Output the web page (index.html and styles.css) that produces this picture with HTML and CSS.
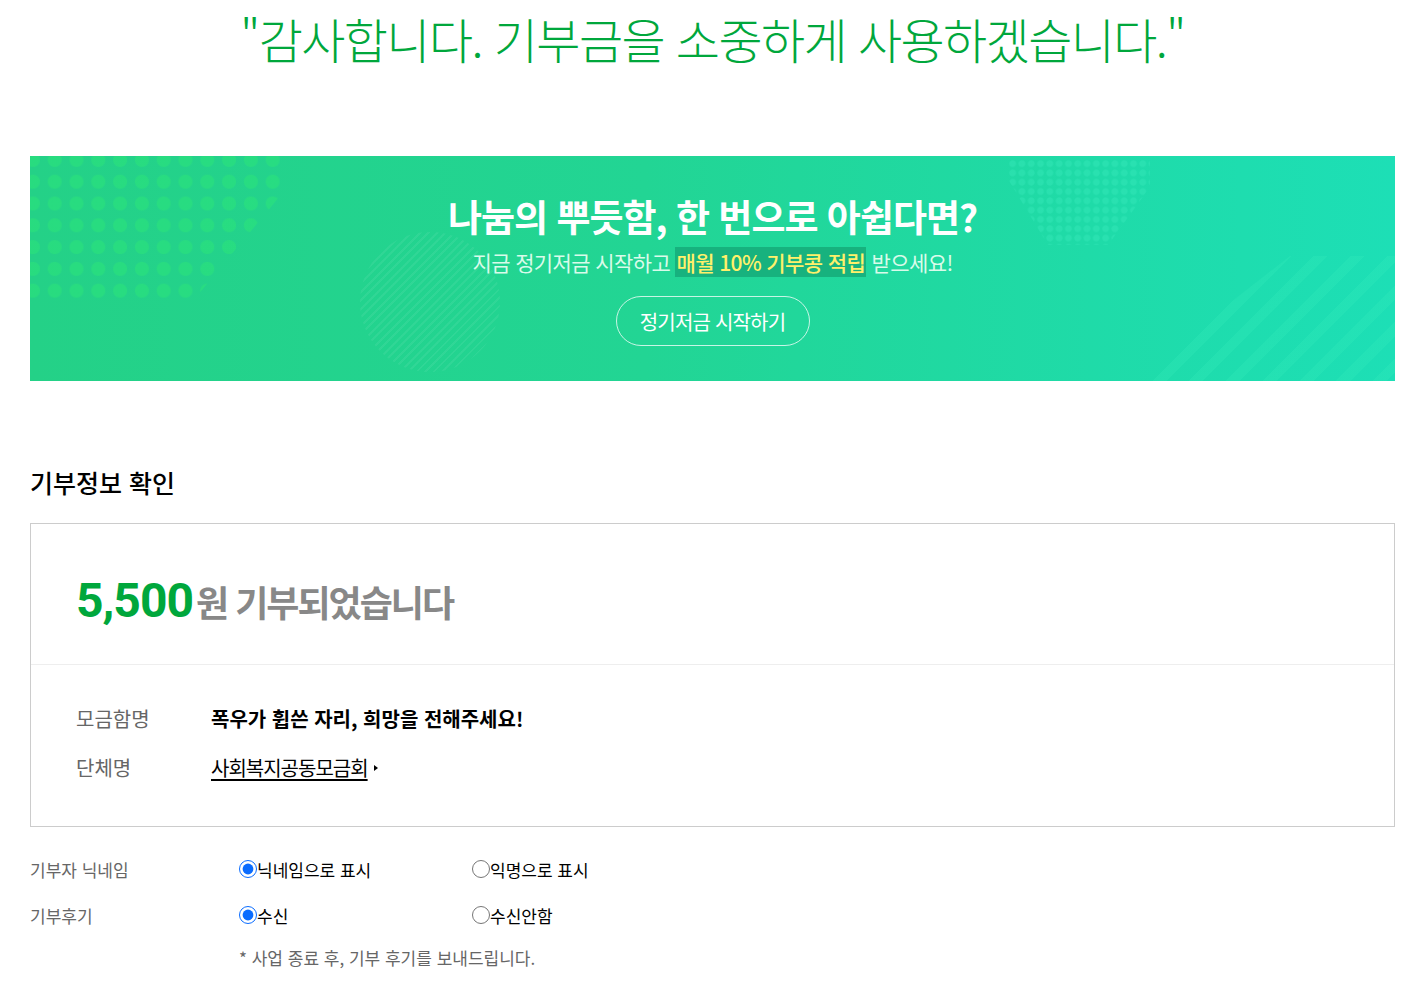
FILE: index.html
```html
<!DOCTYPE html>
<html lang="ko">
<head>
<meta charset="utf-8">
<title>기부 완료</title>
<link rel="stylesheet" href="styles.css">
</head>
<body>
<div class="page">
  <h1 class="thanks">"감사합니다. 기부금을 소중하게 사용하겠습니다."</h1>

  <div class="banner">
    <div class="deco dots-left"></div>
    <div class="deco dots-right"></div>
    <div class="deco stripes-circle"></div>
    <div class="deco stripes-corner"></div>
    <div class="banner-body">
      <p class="banner-title">나눔의 뿌듯함, 한 번으로 아쉽다면?</p>
      <p class="banner-sub">지금 정기저금 시작하고 <span class="hl">매월 10% 기부콩 적립</span> 받으세요!</p>
      <a class="banner-btn" href="#">정기저금 시작하기</a>
    </div>
  </div>

  <h2 class="section-title">기부정보 확인</h2>

  <div class="info-box">
    <div class="info-amount">
      <span class="amount">5,500</span><span class="amount-text">원 기부되었습니다</span>
    </div>
    <div class="info-detail">
      <div class="row">
        <span class="label">모금함명</span>
        <span class="value strong">폭우가 휩쓴 자리, 희망을 전해주세요!</span>
      </div>
      <div class="row">
        <span class="label">단체명</span>
        <span class="value"><a class="org-link" href="#">사회복지공동모금회</a><span class="caret"></span></span>
      </div>
    </div>
  </div>

  <div class="options">
    <div class="opt-row">
      <span class="opt-label">기부자 닉네임</span>
      <label class="radio"><input type="radio" name="nick" checked>닉네임으로 표시</label>
      <label class="radio"><input type="radio" name="nick">익명으로 표시</label>
    </div>
    <div class="opt-row">
      <span class="opt-label">기부후기</span>
      <label class="radio"><input type="radio" name="review" checked>수신</label>
      <label class="radio"><input type="radio" name="review">수신안함</label>
    </div>
    <p class="note">* 사업 종료 후, 기부 후기를 보내드립니다.</p>
  </div>
</div>
</body>
</html>
```

FILE: styles.css
```css
* { box-sizing: border-box; }
html, body { margin: 0; padding: 0; background: #fff; }
body {
  font-family: "Noto Sans CJK KR", "Noto Sans", sans-serif;
  color: #000;
}
.page {
  padding: 0 22px 0 30px;
}
.thanks {
  margin: 0;
  padding-top: 5px;
  text-align: center;
  font-size: 48px;
  font-weight: 300;
  line-height: 66px;
  letter-spacing: -1.6px;
  color: #00a73c;
}

/* banner */
.banner {
  position: relative;
  overflow: hidden;
  margin-top: 85px;
  height: 225px;
  background: linear-gradient(90deg, #24d187 0%, #22d594 45%, #1ddfb6 100%);
}
.deco { position: absolute; pointer-events: none; }
.dots-left {
  left: 0; top: 0;
  width: 250px; height: 146px;
  background-image: radial-gradient(circle, rgba(44, 230, 120, 0.5) 6.5px, transparent 7.5px);
  background-size: 21.8px 21.8px;
  background-position: -8px -7px;
  clip-path: polygon(0 0, 250px 0, 250px 40px, 162px 146px, 0 146px);
}
.dots-right {
  left: 978px; top: 3px;
  width: 142px; height: 86px;
  background-image: radial-gradient(circle, rgba(60, 235, 190, 0.35) 3px, transparent 3.8px);
  background-size: 9.3px 9.3px;
  clip-path: polygon(0 0, 142px 0, 142px 28px, 100px 86px, 40px 86px, 0 20px);
}
.stripes-circle {
  left: 330px; top: 76px;
  width: 140px; height: 140px;
  border-radius: 50%;
  background: repeating-linear-gradient(135deg, rgba(255,255,255,0.06) 0 2px, transparent 2px 6px);
}
.stripes-corner {
  left: 1100px; top: 100px;
  width: 265px; height: 125px;
  background: repeating-linear-gradient(135deg, rgba(60, 240, 190, 0.2) 0 10px, transparent 10px 26px);
  clip-path: polygon(160px 0, 265px 0, 265px 125px, 0 125px);
}
.banner-body {
  position: relative;
  display: flex;
  flex-direction: column;
  align-items: center;
  padding-top: 37px;
}
.banner-title {
  margin: 0;
  font-size: 37px;
  font-weight: 700;
  line-height: 46px;
  letter-spacing: -1px;
  color: #fff;
}
.banner-sub {
  margin: 9px 0 0;
  font-size: 21px;
  line-height: 28px;
  letter-spacing: -0.6px;
  color: #d9fbea;
}
.hl {
  background: #17b27e;
  color: #fff06a;
  font-weight: 500;
  padding: 0 1px;
}
.banner-btn {
  margin-top: 20px;
  width: 194px;
  height: 50px;
  display: flex;
  align-items: center;
  justify-content: center;
  border: 1.5px solid rgba(255,255,255,0.75);
  border-radius: 25px;
  color: #fff;
  font-size: 20px;
  letter-spacing: -0.8px;
  text-decoration: none;
}

/* info */
.section-title {
  margin: 85px 0 0;
  font-size: 25px;
  font-weight: 500;
  line-height: 32px;
  letter-spacing: 0;
  color: #000;
}
.info-box {
  margin-top: 25px;
  border: 1px solid #ccc;
}
.info-amount {
  height: 141px;
  padding: 48px 0 0 45px;
  border-bottom: 1px solid #eee;
  display: flex;
  align-items: baseline;
}
.amount {
  font-family: "Roboto", "Noto Sans", sans-serif;
  font-size: 48px;
  font-weight: 700;
  letter-spacing: -1px;
  color: #00a73c;
}
.amount-text {
  margin-left: 3px;
  font-size: 36px;
  font-weight: 700;
  letter-spacing: -2px;
  color: #888;
}
.info-detail {
  padding: 39px 0 44px 45px;
  display: flex;
  flex-direction: column;
  gap: 20px;
}
.row {
  display: flex;
  align-items: center;
  font-size: 20px;
  line-height: 29px;
  letter-spacing: 0;
}
.label {
  width: 135px;
  color: #666;
}
.value { color: #000; display: flex; align-items: center; }
.strong { font-weight: 700; letter-spacing: 0; }
.org-link {
  color: #000;
  text-decoration: underline;
  text-underline-offset: 3px;
  letter-spacing: -1px;
}
.caret {
  margin-left: 6px;
  width: 0; height: 0;
  border-left: 4px solid #000;
  border-top: 3.5px solid transparent;
  border-bottom: 3.5px solid transparent;
}

/* options */
.options {
  padding-top: 28px;
}
.opt-row {
  display: flex;
  align-items: center;
  height: 28px;
  margin-bottom: 18px;
  font-size: 17px;
  letter-spacing: 0;
}
.opt-label {
  width: 209px;
  color: #666;
}
.radio {
  width: 233px;
  display: flex;
  align-items: center;
  color: #000;
}
.radio input {
  margin: 0;
  width: 18px;
  height: 18px;
  accent-color: #0a6cff;
}
.note {
  margin: -3px 0 0 209px;
  font-size: 17px;
  line-height: 28px;
  letter-spacing: 0;
  color: #666;
}
```
